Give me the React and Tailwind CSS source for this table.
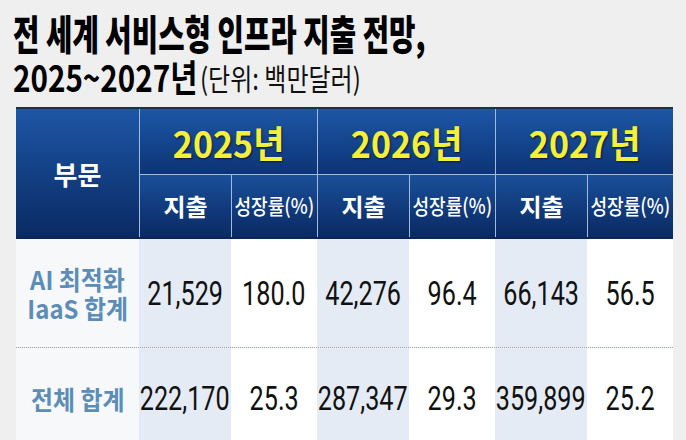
import React from "react";

const KR = { fontFamily: '"Noto Sans CJK KR", "Noto Sans", sans-serif' };
const NUM = { fontFamily: 'Roboto, "Liberation Sans", sans-serif' };

const rows = [
  { label: ["AI 최적화", "IaaS 합계"], vals: ["21,529", "180.0", "42,276", "96.4", "66,143", "56.5"], h: "h-[109px]" },
  { label: ["전체 합계"], vals: ["222,170", "25.3", "287,347", "29.3", "359,899", "25.2"], h: "h-[100px]" },
];

function Num({ v }) {
  return (
    <span className="block w-fit scale-x-[0.74] whitespace-nowrap text-[34px] leading-[40px] text-[#111]" style={NUM}>
      {v}
    </span>
  );
}

export default function App() {
  return (
    <div className="w-[686px] h-[440px] overflow-hidden bg-[#efefef]" style={KR}>
      <div className="pl-[13px] pt-[8px] h-[97px]">
        <div className="h-[48px] whitespace-nowrap">
          <span className="block w-fit origin-left scale-x-[0.7] text-[41px] font-black leading-[48px] text-black">
            전 세계 서비스형 인프라 지출 전망,
          </span>
        </div>
        <div className="flex h-[40px] items-end whitespace-nowrap">
          <div className="w-[187px]">
            <span className="block w-fit origin-left scale-x-[0.8] text-[37px] font-bold leading-[40px] text-black">
              2025~2027년
            </span>
          </div>
          <div>
            <span className="block w-fit origin-left scale-x-[0.8] text-[30px] font-normal leading-[38px] text-[#111]">
              (단위: 백만달러)
            </span>
          </div>
        </div>
      </div>

      <div className="ml-[16px] mt-[10px] w-[657px] border-t-2 border-[#1b2f55]">
        <div className="grid grid-cols-[123px_92px_86px_92px_86px_92px_86px] grid-rows-[66px_62px]">
          <div className="row-span-2 flex items-center justify-center bg-gradient-to-b from-[#1d57a6] to-[#0a2a63]">
            <span className="text-[26px] font-bold text-white">부문</span>
          </div>
          {["2025년", "2026년", "2027년"].map((y) => (
            <div
              key={y}
              className="col-span-2 flex items-center justify-center border-l border-b border-[#9fbbdf] bg-gradient-to-b from-[#1d57a6] to-[#0d3476]"
            >
              <span className="block w-fit scale-x-[0.92] text-[37px] font-bold leading-[44px] text-[#f3f03a] [text-shadow:1px_1px_2px_#051638]">
                {y}
              </span>
            </div>
          ))}
          {[0, 1, 2].map((i) => (
            <React.Fragment key={i}>
              <div className="flex items-center justify-center border-l border-[#9fbbdf] bg-gradient-to-b from-[#1a4f99] to-[#0a2a63]">
                <span className="text-[24px] font-bold text-white">지출</span>
              </div>
              <div className="flex items-center justify-center border-l border-[#9fbbdf] bg-gradient-to-b from-[#1a4f99] to-[#0a2a63]">
                <span className="block w-fit scale-x-[0.86] whitespace-nowrap text-[21px] font-medium text-white">성장률(%)</span>
              </div>
            </React.Fragment>
          ))}
        </div>
        <div className="h-[2px] bg-[#0a2558]" />

        {rows.map((r, ri) => (
          <div
            key={ri}
            className={`grid grid-cols-[123px_92px_86px_92px_86px_92px_86px] ${r.h} ${ri === 0 ? "border-b border-dotted border-[#9aa3ad]" : ""}`}
          >
            <div className="flex flex-col items-center justify-center bg-[#f7f8fa] text-[26px] font-bold leading-[29px] text-[#5b8db6]">
              {r.label.map((l) => (
                <span key={l} className="block w-fit scale-x-[0.92] whitespace-nowrap">{l}</span>
              ))}
            </div>
            {r.vals.map((v, i) => (
              <div
                key={i}
                className={`flex items-center justify-center ${i % 2 === 0 ? "bg-[#e4ebf4]" : "bg-white"}`}
              >
                <Num v={v} />
              </div>
            ))}
          </div>
        ))}
      </div>
    </div>
  );
}
